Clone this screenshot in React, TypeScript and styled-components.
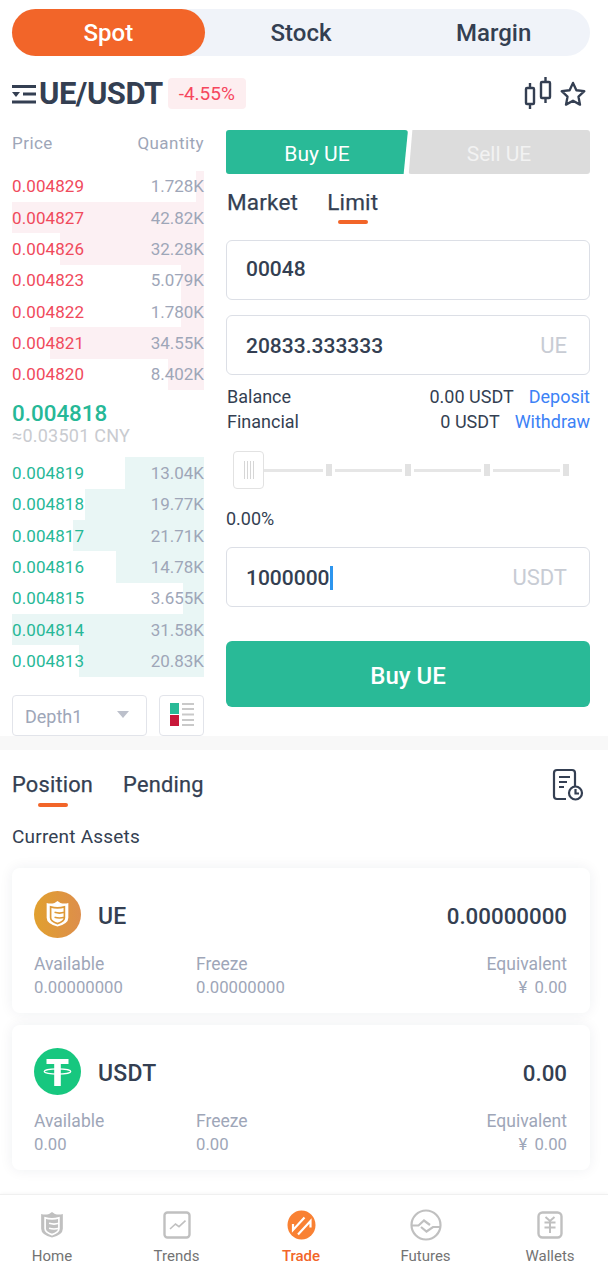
import React from 'react';
import styled, { createGlobalStyle } from 'styled-components';

const GlobalStyle = createGlobalStyle`
  html, body {
    margin: 0;
    padding: 0;
    background: #fff;
    font-family: Roboto, "Noto Sans", sans-serif;
    color: #343f52;
  }
  * { box-sizing: border-box; }
`;

const asks = [
  { price: '0.004829', qty: '1.728K', depth: 4 },
  { price: '0.004827', qty: '42.82K', depth: 100 },
  { price: '0.004826', qty: '32.28K', depth: 75 },
  { price: '0.004823', qty: '5.079K', depth: 12 },
  { price: '0.004822', qty: '1.780K', depth: 12 },
  { price: '0.004821', qty: '34.55K', depth: 80 },
  { price: '0.004820', qty: '8.402K', depth: 19 },
];

const bids = [
  { price: '0.004819', qty: '13.04K', depth: 41 },
  { price: '0.004818', qty: '19.77K', depth: 62 },
  { price: '0.004817', qty: '21.71K', depth: 68 },
  { price: '0.004816', qty: '14.78K', depth: 46 },
  { price: '0.004815', qty: '3.655K', depth: 11 },
  { price: '0.004814', qty: '31.58K', depth: 100 },
  { price: '0.004813', qty: '20.83K', depth: 65 },
];

const ShieldIcon = ({ width, body, line }: { width: number; body: string; line: string }) => (
  <svg width={width} height={width * 1.15} viewBox="0 0 24 28">
    <path d="M12 1 L15 3 Q19 4.200 23 3 V18 Q23 24 12 27 Q1 24 1 18 V3 Q5 4.200 9 3 Z" fill={body} />
    <path
      d="M5 7 Q12 9 19 7 V18 Q19 21.500 12 24 Q5 21.500 5 18 Z M9 12.500 Q14 14 19 12.500 M9 17.500 Q14 19 19 17.500"
      fill="none"
      stroke={line}
      strokeWidth="1.700"
    />
  </svg>
);

const Page = styled.div`
  width: 608px;
  height: 1272px;
  overflow: hidden;
  background: #fff;
`;

const Segments = styled.div`
  display: grid;
  grid-template-columns: repeat(3, 1fr);
  height: 47px;
  margin: 9px 18px 0 12px;
  border-radius: 24px;
  background: #f0f3f9;
`;

const Segment = styled.div<{ $active?: boolean }>`
  display: flex;
  align-items: center;
  justify-content: center;
  border-radius: 24px;
  font-size: 24px;
  font-weight: 500;
  color: ${(p) => (p.$active ? '#fff' : '#343f52')};
  background: ${(p) => (p.$active ? '#f26529' : 'transparent')};
`;

const PairBar = styled.div`
  display: flex;
  align-items: center;
  height: 31px;
  margin: 22px 18px 0 12px;
`;

const PairName = styled.div`
  font-size: 31px;
  font-weight: 700;
  letter-spacing: -0.5px;
  line-height: 31px;
  margin: 0 5px 0 3px;
`;

const ChangeBadge = styled.div`
  width: 78px;
  height: 31px;
  display: flex;
  align-items: center;
  justify-content: center;
  border-radius: 4px;
  background: #fdeef0;
  color: #f6465d;
  font-size: 19px;
`;

const PairIcons = styled.div`
  display: flex;
  align-items: center;
  gap: 7px;
  margin-left: auto;
  margin-right: 3px;
`;

const Market = styled.div`
  display: grid;
  grid-template-columns: 192px 364px;
  column-gap: 22px;
  margin: 21px 18px 0 12px;
  height: 606px;
`;

const Book = styled.div`
  display: flex;
  flex-direction: column;
`;

const BookHead = styled.div`
  display: flex;
  justify-content: space-between;
  align-items: center;
  height: 40.5px;
  padding-bottom: 14px;
  font-size: 17px;
  letter-spacing: 0.45px;
  color: #9ea6b8;
`;

const BookRow = styled.div<{ $side: 'ask' | 'bid'; $depth: number }>`
  display: flex;
  justify-content: space-between;
  align-items: center;
  height: 31.35px;
  font-size: 17px;
  background: linear-gradient(
    to left,
    ${(p) => (p.$side === 'ask' ? '#fcf0f3' : '#e9f6f5')} ${(p) => p.$depth}%,
    transparent ${(p) => p.$depth}%
  );
`;

const RowPrice = styled.span<{ $side: 'ask' | 'bid' }>`
  color: ${(p) => (p.$side === 'ask' ? '#f04a5c' : '#26b897')};
  letter-spacing: 0.1px;
`;

const RowQty = styled.span`
  color: #9ea6b8;
`;

const LastPrice = styled.div`
  height: 67.5px;
  padding-top: 10px;
`;

const LastValue = styled.div`
  font-size: 22.4px;
  line-height: 26px;
  font-weight: 500;
  color: #26b897;
`;

const LastFiat = styled.div`
  font-size: 18px;
  line-height: 20px;
  letter-spacing: 0.25px;
  color: #c9cbd0;
`;

const BookFoot = styled.div`
  display: flex;
  justify-content: space-between;
  margin-top: 18px;
`;

const DepthSelect = styled.div`
  width: 135px;
  height: 41px;
  display: flex;
  align-items: center;
  justify-content: space-between;
  padding: 3px 17px 0 12px;
  border: 1px solid #e2e4ea;
  border-radius: 4px;
  font-size: 18px;
  color: #9ea6b8;
  &::after {
    content: '';
    margin-top: -4px;
    border-left: 6px solid transparent;
    border-right: 6px solid transparent;
    border-top: 7px solid #bcc0cb;
  }
`;

const LayoutButton = styled.div`
  width: 45px;
  height: 41px;
  display: flex;
  align-items: center;
  justify-content: center;
  padding-left: 1px;
  border: 1px solid #e2e4ea;
  border-radius: 4px;
`;

const Ticket = styled.div`
  display: flex;
  flex-direction: column;
`;

const SideTabs = styled.div`
  display: flex;
  height: 44px;
`;

const SideTab = styled.div<{ $buy?: boolean }>`
  flex: 1;
  display: flex;
  align-items: center;
  justify-content: center;
  padding-top: 3px;
  font-size: 21px;
  color: ${(p) => (p.$buy ? '#fff' : '#f2f2f2')};
  background: ${(p) => (p.$buy ? '#29ba97' : '#dcdcdc')};
  border-radius: 3px;
  clip-path: ${(p) =>
    p.$buy
      ? 'polygon(0 0, 100% 0, 97.6% 100%, 0 100%)'
      : 'polygon(2.4% 0, 100% 0, 100% 100%, 0.4% 100%)'};
`;

const TabRow = styled.div<{ $gap: number }>`
  display: flex;
  align-items: flex-start;
  gap: ${(p) => p.$gap}px;
`;

const TabLabel = styled.div<{ $active?: boolean; $size: number }>`
  position: relative;
  font-size: ${(p) => p.$size}px;
  line-height: 28px;
  letter-spacing: 0.2px;
  color: #343f52;
  -webkit-text-stroke: 0.25px #343f52;
  ${(p) =>
    p.$active &&
    `&::after {
      content: '';
      position: absolute;
      left: 50%;
      bottom: -8px;
      width: 30px;
      height: 4px;
      margin-left: -15px;
      border-radius: 2px;
      background: #f26529;
    }`}
`;

const OrderTabs = styled(TabRow)`
  margin: 14px 0 0 1px;
  height: 52px;
`;

const Field = styled.div<{ $mb?: number; $lift?: boolean }>`
  height: 60px;
  display: flex;
  align-items: center;
  justify-content: space-between;
  padding: ${(p) => (p.$lift ? '0 22px 3px 19px' : '1px 22px 0 19px')};
  margin-bottom: ${(p) => p.$mb ?? 0}px;
  border: 1px solid #dcdfe6;
  border-radius: 6px;
  font-size: 21px;
  font-weight: 500;
`;

const FieldValue = styled.span<{ $focus?: boolean }>`
  ${(p) => p.$focus && 'border-right: 3px solid #2d95ee;'}
`;

const FieldUnit = styled.span`
  font-size: 22px;
  font-weight: 400;
  color: #c8ccd4;
`;

const InfoRow = styled.div`
  display: flex;
  align-items: center;
  height: 25px;
  font-size: 18px;
  padding-left: 1px;
`;

const InfoValue = styled.span`
  margin-left: auto;
  margin-right: 15px;
`;

const InfoLink = styled.a`
  color: #3c82f6;
`;

const Slider = styled.div`
  position: relative;
  display: flex;
  align-items: center;
  justify-content: space-between;
  height: 38px;
  margin: 17px 21px 0 7px;
  padding-left: 93px;
  &::before {
    content: '';
    position: absolute;
    left: 20px;
    right: 0;
    top: 18px;
    height: 3px;
    background: #e6e6e6;
  }
`;

const SliderThumb = styled.div`
  position: absolute;
  left: 0;
  top: 0;
  width: 31px;
  height: 38px;
  display: flex;
  align-items: center;
  justify-content: center;
  gap: 2px;
  background: #fff;
  border: 1px solid #e2e2e2;
  border-radius: 4px;
  span {
    width: 1px;
    height: 18px;
    background: #d6d6d6;
  }
`;

const SliderTick = styled.div`
  position: relative;
  width: 6px;
  height: 12px;
  background: #e2e2e2;
  box-shadow: 0 0 0 3px #fff;
`;

const Percent = styled.div`
  font-size: 18px;
  line-height: 22px;
  margin: 19px 0 17px;
`;

const BuyButton = styled.div`
  height: 66px;
  margin-top: 34px;
  padding-top: 3px;
  display: flex;
  align-items: center;
  justify-content: center;
  border-radius: 6px;
  background: #29ba97;
  color: #fff;
  font-size: 24px;
  font-weight: 500;
`;

const Band = styled.div`
  height: 14px;
  background: #f8f8f8;
`;

const OrdersHead = styled.div`
  display: flex;
  align-items: center;
  justify-content: space-between;
  margin: 21px 24px 0 12px;
  height: 28px;
`;

const AssetsTitle = styled.div`
  margin: 26px 0 0 12px;
  font-size: 19px;
  line-height: 24px;
  letter-spacing: 0.2px;
`;

const Cards = styled.div`
  display: flex;
  flex-direction: column;
  gap: 12px;
  margin: 19px 18px 0 12px;
`;

const Card = styled.div`
  height: 145px;
  padding: 23px 23px 0 22px;
  border-radius: 8px;
  background: #fff;
  box-shadow: 0 0 14px rgba(30, 40, 70, 0.07);
`;

const CardTop = styled.div`
  display: flex;
  align-items: center;
  gap: 17px;
  height: 47px;
`;

const CoinName = styled.div`
  margin-top: 3px;
  font-size: 23px;
  letter-spacing: 0.3px;
  font-weight: 500;
`;

const CoinTotal = styled.div`
  margin: 3px 0 0 auto;
  font-size: 22.3px;
  font-weight: 500;
`;

const CardStats = styled.div`
  display: grid;
  grid-template-columns: 162px 1fr auto;
  margin-top: 14px;
  font-size: 17.5px;
  line-height: 24px;
  color: #9ea6b8;
`;

const Stat = styled.div<{ $right?: boolean }>`
  text-align: ${(p) => (p.$right ? 'right' : 'left')};
`;

const StatValue = styled.div`
  font-size: 16.7px;
  word-spacing: 3px;
`;

const Nav = styled.div`
  display: grid;
  grid-template-columns: repeat(5, 100px);
  justify-content: space-between;
  height: 78px;
  margin-top: 24px;
  padding: 0 8px 0 2px;
  border-top: 1px solid #f0f0f0;
  box-shadow: 0 -1px 3px rgba(0, 0, 0, 0.03);
`;

const NavItem = styled.div<{ $active?: boolean }>`
  display: flex;
  flex-direction: column;
  align-items: center;
  justify-content: flex-end;
  padding-bottom: 6px;
  font-size: 15px;
  line-height: 20px;
  font-weight: ${(p) => (p.$active ? 500 : 400)};
  color: ${(p) => (p.$active ? '#f26529' : '#737373')};
`;

const NavIcon = styled.div`
  height: 36px;
  display: flex;
  align-items: center;
  justify-content: center;
  margin-bottom: 3px;
`;

const stroke = '#343f52';
const navGray = '#c0c0c0';

const AssetCard = ({
  icon,
  name,
  total,
  available,
}: {
  icon: React.ReactNode;
  name: string;
  total: string;
  available: string;
}) => (
  <Card>
    <CardTop>
      {icon}
      <CoinName>{name}</CoinName>
      <CoinTotal>{total}</CoinTotal>
    </CardTop>
    <CardStats>
      <Stat>
        Available
        <StatValue>{available}</StatValue>
      </Stat>
      <Stat>
        Freeze
        <StatValue>{available}</StatValue>
      </Stat>
      <Stat $right>
        Equivalent
        <StatValue>¥ 0.00</StatValue>
      </Stat>
    </CardStats>
  </Card>
);

export default function App() {
  return (
    <Page>
      <GlobalStyle />
      <Segments>
        <Segment $active>Spot</Segment>
        <Segment>Stock</Segment>
        <Segment>Margin</Segment>
      </Segments>

      <PairBar>
        <svg width="24" height="24" viewBox="0 0 24 24">
          <path d="M0 3h24v3H0zM11 10.500h13v3H11zM0 18.500h24v3H0z" fill={stroke} />
          <path d="M0 10h8l-4 5z" fill={stroke} />
        </svg>
        <PairName>UE/USDT</PairName>
        <ChangeBadge>-4.55%</ChangeBadge>
        <PairIcons>
          <svg width="28" height="36" viewBox="0 0 28 36" fill="none" stroke={stroke} strokeWidth="2.400">
            <rect x="2" y="12" width="8" height="16" rx="1" />
            <path d="M6 7v5M6 28v5" />
            <rect x="17" y="6" width="9" height="16" rx="1" />
            <path d="M21.500 1v5M21.500 22v5" />
          </svg>
          <svg width="28" height="28" viewBox="0 0 24 24" fill="none" stroke={stroke} strokeWidth="2" strokeLinejoin="round">
            <path d="M12 2.500l2.900 6.300 6.800.8-5 4.700 1.300 6.800-6-3.400-6 3.400 1.300-6.800-5-4.700 6.800-.8z" />
          </svg>
        </PairIcons>
      </PairBar>

      <Market>
        <Book>
          <BookHead>
            <span>Price</span>
            <span>Quantity</span>
          </BookHead>
          {asks.map((row) => (
            <BookRow key={row.price} $side="ask" $depth={row.depth}>
              <RowPrice $side="ask">{row.price}</RowPrice>
              <RowQty>{row.qty}</RowQty>
            </BookRow>
          ))}
          <LastPrice>
            <LastValue>0.004818</LastValue>
            <LastFiat>≈0.03501 CNY</LastFiat>
          </LastPrice>
          {bids.map((row) => (
            <BookRow key={row.price} $side="bid" $depth={row.depth}>
              <RowPrice $side="bid">{row.price}</RowPrice>
              <RowQty>{row.qty}</RowQty>
            </BookRow>
          ))}
          <BookFoot>
            <DepthSelect>Depth1</DepthSelect>
            <LayoutButton>
              <svg width="24" height="24" viewBox="0 0 24 24">
                <rect x="0" y="0" width="9" height="11" fill="#29ba97" />
                <rect x="0" y="12" width="9" height="11" fill="#c8183a" />
                <path d="M12 1h12M12 6h12M12 11.500h12M12 17h12M12 22h12" stroke="#c9c9c9" strokeWidth="2" />
              </svg>
            </LayoutButton>
          </BookFoot>
        </Book>

        <Ticket>
          <SideTabs>
            <SideTab $buy>Buy UE</SideTab>
            <SideTab>Sell UE</SideTab>
          </SideTabs>
          <OrderTabs $gap={29}>
            <TabLabel $size={22.5}>Market</TabLabel>
            <TabLabel $size={22.5} $active>
              Limit
            </TabLabel>
          </OrderTabs>
          <Field $mb={15} $lift>
            <FieldValue>00048</FieldValue>
          </Field>
          <Field $mb={9}>
            <FieldValue>20833.333333</FieldValue>
            <FieldUnit>UE</FieldUnit>
          </Field>
          <InfoRow>
            Balance
            <InfoValue>0.00 USDT</InfoValue>
            <InfoLink>Deposit</InfoLink>
          </InfoRow>
          <InfoRow>
            Financial
            <InfoValue>0 USDT</InfoValue>
            <InfoLink>Withdraw</InfoLink>
          </InfoRow>
          <Slider>
            <SliderThumb>
              <span />
              <span />
              <span />
              <span />
            </SliderThumb>
            <SliderTick />
            <SliderTick />
            <SliderTick />
            <SliderTick />
          </Slider>
          <Percent>0.00%</Percent>
          <Field>
            <FieldValue $focus>1000000</FieldValue>
            <FieldUnit>USDT</FieldUnit>
          </Field>
          <BuyButton>Buy UE</BuyButton>
        </Ticket>
      </Market>

      <Band />

      <OrdersHead>
        <TabRow $gap={30}>
          <TabLabel $size={21.8} $active>
            Position
          </TabLabel>
          <TabLabel $size={21.8}>Pending</TabLabel>
        </TabRow>
        <svg width="32" height="34" viewBox="0 0 32 34" fill="none" stroke={stroke} strokeWidth="2.200">
          <path d="M14 31H5a3 3 0 0 1-3-3V5a3 3 0 0 1 3-3h15a3 3 0 0 1 3 3v13" />
          <path d="M7 9h11M7 14h8M7 19h5" />
          <circle cx="23.500" cy="25" r="6.500" fill="#fff" />
          <path d="M23.500 21v4.500h3.500" />
        </svg>
      </OrdersHead>

      <AssetsTitle>Current Assets</AssetsTitle>

      <Cards>
        <AssetCard
          name="UE"
          total="0.00000000"
          available="0.00000000"
          icon={
            <svg width="47" height="47" viewBox="0 0 47 47">
              <defs>
                <linearGradient id="ueCoin" x1="0" x2="1" y1="0" y2="0">
                  <stop offset="0" stopColor="#e1a02e" />
                  <stop offset="1" stopColor="#dd8e4c" />
                </linearGradient>
              </defs>
              <circle cx="23.500" cy="23.500" r="23.500" fill="url(#ueCoin)" />
              <g transform="translate(11.500 9)">
                <ShieldIcon width={24} body="#fff" line="#df9a38" />
              </g>
            </svg>
          }
        />
        <AssetCard
          name="USDT"
          total="0.00"
          available="0.00"
          icon={
            <svg width="47" height="47" viewBox="0 0 47 47">
              <circle cx="23.500" cy="23.500" r="23.500" fill="#17c77f" />
              <path d="M12.500 11h22v5h-7.700v22h-6.600V16h-7.700z" fill="#fff" />
              <ellipse cx="23.500" cy="23.500" rx="13.300" ry="2.600" fill="none" stroke="#fff" strokeWidth="1.200" />
            </svg>
          }
        />
      </Cards>

      <Nav>
        <NavItem>
          <NavIcon>
            <ShieldIcon width={24} body={navGray} line="#fff" />
          </NavIcon>
          Home
        </NavItem>
        <NavItem>
          <NavIcon>
            <svg width="28" height="28" viewBox="0 0 28 28" fill="none" stroke={navGray} strokeWidth="2.400">
              <rect x="1.500" y="1.500" width="25" height="25" rx="3" />
              <path d="M7 18l5.500-5 3.500 2.700 6.500-6" strokeWidth="1.600" />
            </svg>
          </NavIcon>
          Trends
        </NavItem>
        <NavItem $active>
          <NavIcon>
            <svg width="29" height="30" viewBox="0 0 29 30">
              <ellipse cx="14.500" cy="15" rx="14" ry="14.500" fill="#f98133" />
              <path d="M6 14v6L17.500 7.500M11 24.500L23.500 11v6.500" fill="none" stroke="#fff" strokeWidth="2.200" />
            </svg>
          </NavIcon>
          Trade
        </NavItem>
        <NavItem>
          <NavIcon>
            <svg width="32" height="32" viewBox="0 0 32 32" fill="none" stroke={navGray} strokeWidth="2.200">
              <circle cx="16" cy="16" r="14.500" />
              <path d="M2 16.500h6.500L14 11.500l6 4.500" />
              <path d="M11 18l5.500 4.500 6.500-4.500h7" />
            </svg>
          </NavIcon>
          Futures
        </NavItem>
        <NavItem>
          <NavIcon>
            <svg width="26" height="28" viewBox="0 0 26 28" fill="none" stroke={navGray} strokeWidth="2.400">
              <rect x="1.500" y="1.500" width="23" height="25" rx="4" />
              <path d="M8.500 6l4.500 4 4.500-4M13 10v12M7.500 11.500h11M7.500 16.500h11" strokeWidth="2" />
            </svg>
          </NavIcon>
          Wallets
        </NavItem>
      </Nav>
    </Page>
  );
}
